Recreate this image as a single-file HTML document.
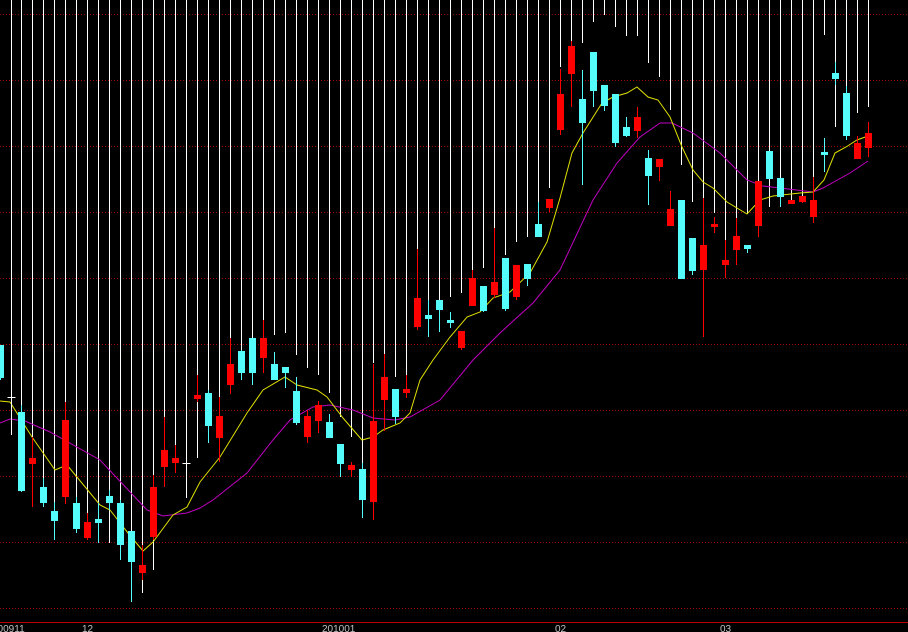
<!DOCTYPE html>
<html><head><meta charset="utf-8"><style>
html,body{margin:0;padding:0;background:#000;width:908px;height:632px;overflow:hidden}
svg{display:block}
text{font-family:"Liberation Sans",sans-serif;font-size:10px;fill:#c0c0c0}
</style></head><body>
<svg id="s" width="908" height="632" viewBox="0 0 908 632" xmlns="http://www.w3.org/2000/svg">
<g stroke="#a00000" stroke-width="1" stroke-dasharray="1,2">
<line x1="0" y1="14.5" x2="908" y2="14.5"/><line x1="0" y1="80.5" x2="908" y2="80.5"/>
<line x1="0" y1="146.5" x2="908" y2="146.5"/><line x1="0" y1="212.5" x2="908" y2="212.5"/>
<line x1="0" y1="278.5" x2="908" y2="278.5"/><line x1="0" y1="344.5" x2="908" y2="344.5"/>
<line x1="0" y1="410.5" x2="908" y2="410.5"/><line x1="0" y1="476.5" x2="908" y2="476.5"/>
<line x1="0" y1="542.5" x2="908" y2="542.5"/><line x1="0" y1="608.5" x2="908" y2="608.5"/>
</g>
<g id="lines" stroke="#fff" stroke-width="1"></g>
<polyline fill="none" stroke="#c000c0" stroke-width="1" points="0,423 10,419 25,421 50,432 100,460 147,510 163,516 187,513 200,508 213,500 247,473 273,440 290,420 313,407 330,405 353,410 373,418 395,420 410,417 440,400 473,360 500,333 533,303 560,270 593,200 617,163 640,137 660,123 672,123 693,133 720,153 747,180 763,186 780,188 813,192 823,188 850,173 868,161"/>
<polyline fill="none" stroke="#e0e000" stroke-width="1" points="0,401 10,402 32,437 55,470 67,465 100,505 110,510 128,533 143,551 153,542 173,515 187,507 200,482 220,457 247,413 263,390 285,377 297,385 317,390 327,397 343,418 362,440 373,437 383,430 400,423 410,413 420,380 433,360 450,337 467,317 480,312 493,298 510,292 530,273 547,242 560,198 572,153 583,133 602,103 613,97 627,93 637,87 648,97 658,100 670,117 682,147 693,170 703,182 713,188 727,202 747,214 760,200 773,196 800,193 813,192 824,180 835,153 846,147 857,140 868,136"/>
<g id="c"></g>
<line x1="0" y1="622.5" x2="908" y2="622.5" stroke="#c00000" stroke-width="1"/>
<text x="-8" y="632">200911</text><text x="82" y="632">12</text><text x="322" y="632">201001</text><text x="555" y="632">02</text><text x="720" y="632">03</text>
</svg>
<script>
var d=[[0,'c',345,378,345,380,0],[11,'w',397,397,383,435,435],[21,'c',412,491,405,492,412],[32,'r',458,464,437,507,437],[43,'c',487,503,478,507,478],[54,'c',511,521,502,540,540],[65,'r',420,497,402,504,402],[76,'c',503,529,497,533,497],[87,'r',522,538,513,540,513],[98,'c',519,523,503,543,543],[109,'c',496,503,490,510,543],[120,'c',503,545,500,560,560],[131,'c',531,562,531,602,531],[142,'r',565,573,545,580,593],[153,'r',487,537,475,540,570],[164,'r',450,467,417,487,487],[175,'r',458,463,445,473,473],[186,'w',463,463,455,470,498],[197,'r',395,399,375,402,458],[208,'c',393,426,390,443,443],[219,'r',416,438,397,462,397],[230,'r',364,385,338,394,338],[241,'c',351,373,350,380,350],[252,'c',338,373,338,385,338],[263,'r',338,358,320,373,320],[274,'c',364,380,352,380,335],[285,'c',367,373,367,388,333],[296,'c',391,423,377,425,355],[307,'r',416,437,410,443,368],[318,'r',405,421,401,433,375],[329,'c',422,438,414,438,393],[340,'c',444,464,444,477,417],[351,'r',465,470,462,477,437],[362,'c',469,500,463,518,463],[373,'r',421,502,364,520,363],[384,'r',377,400,354,431,354],[395,'c',389,417,389,424,377],[406,'r',389,393,375,398,375],[417,'r',298,327,249,330,249],[428,'c',315,319,300,337,300],[439,'c',300,310,300,332,300],[450,'c',320,323,312,328,297],[461,'r',331,348,331,350,293],[472,'r',278,306,270,306,270],[483,'c',286,311,286,312,268],[494,'r',282,295,228,298,228],[505,'c',258,309,258,311,255],[516,'r',265,297,265,300,242],[527,'c',264,279,264,286,237],[538,'c',224,237,202,237,202],[549,'r',199,208,199,212,188],[560,'r',94,130,69,135,67],[571,'r',46,74,41,107,41],[582,'c',99,123,70,185,43],[593,'c',52,91,52,107,22],[604,'c',85,106,85,111,15],[615,'c',94,143,94,147,27],[626,'c',127,136,117,137,36],[637,'r',117,131,107,138,36],[648,'c',158,176,150,205,63],[659,'r',159,167,159,181,77],[670,'r',209,226,191,226,110],[681,'c',200,279,200,279,165],[692,'c',238,271,238,275,202],[703,'r',245,270,198,337,198],[714,'r',224,226,217,233,213],[725,'r',260,265,240,278,240],[736,'r',236,250,218,265,218],[747,'c',245,249,245,253,214],[758,'r',181,226,181,237,181],[769,'c',151,179,151,179,207],[780,'c',178,197,178,207,178],[791,'r',200,204,200,204,200],[802,'r',196,202,196,203,196],[813,'r',200,217,177,223,177],[824,'c',152,154,138,172,35],[835,'c',73,79,62,85,127],[846,'c',93,136,86,140,86],[857,'r',143,159,136,159,113],[868,'r',133,148,122,157,107]];
var NS="http://www.w3.org/2000/svg",L=document.getElementById('lines'),C=document.getElementById('c');
function el(p,t,a){var e=document.createElementNS(NS,t);for(var k in a)e.setAttribute(k,a[k]);p.appendChild(e);}
d.forEach(function(k){var x=k[0]+0.5,col=k[1]=='c'?'#54fcfc':k[1]=='r'?'#ff0000':'#ffffff';
if(k[6]>0)el(L,'line',{x1:x,y1:0,x2:x,y2:k[6]});
el(C,'line',{x1:x,y1:k[4],x2:x,y2:k[5],stroke:col,'stroke-width':1});
if(k[1]=='w'){el(C,'line',{x1:x-4,y1:k[2]+0.5,x2:x+4,y2:k[2]+0.5,stroke:col,'stroke-width':1});}
else{var h=Math.max(3,k[3]-k[2]);el(C,'rect',{x:k[0]-3,y:k[2],width:7,height:h,fill:col});}
});
</script>
</body></html>
